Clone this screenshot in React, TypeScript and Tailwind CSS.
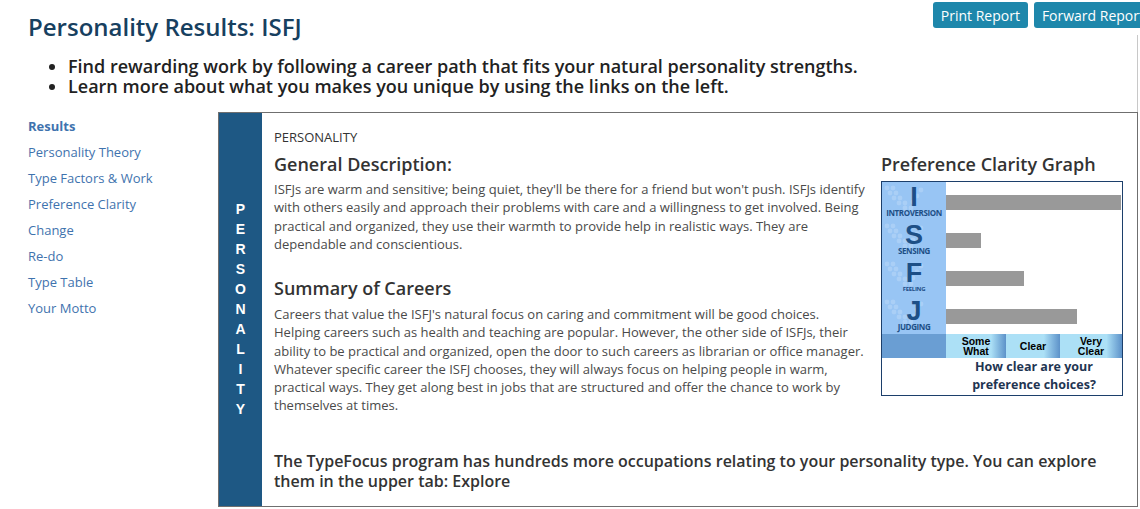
import React from 'react';

const navItems = [
  'Results',
  'Personality Theory',
  'Type Factors & Work',
  'Preference Clarity',
  'Change',
  'Re-do',
  'Type Table',
  'Your Motto',
];

const graphRows = [
  { letter: 'I', label: 'INTROVERSION', bar: 175, labelSize: 'text-[8px]' },
  { letter: 'S', label: 'SENSING', bar: 35, labelSize: 'text-[8px]' },
  { letter: 'F', label: 'FEELING', bar: 78, labelSize: 'text-[6px]' },
  { letter: 'J', label: 'JUDGING', bar: 131, labelSize: 'text-[8px]' },
];

function DotV() {
  // faint dotted "V" swoosh behind each letter
  const dots: [number, number][] = [
    [5, 6], [11, 6], [8, 11], [14, 11], [12, 16], [18, 16], [17, 21], [23, 21],
    [23, 26], [29, 26], [31, 20], [35, 14], [39, 8],
  ];
  return (
    <svg className="absolute left-0 top-0" width="64" height="38" viewBox="0 0 64 38">
      {dots.map(([x, y], i) => (
        <circle key={i} cx={x} cy={y} r="2.4" fill="#ffffff" opacity="0.18" />
      ))}
    </svg>
  );
}

function ClarityGraph() {
  return (
    <div className="w-[242px]">
      <h3 className="text-[18px] leading-6 font-semibold text-[#333]">Preference Clarity Graph</h3>
      <div className="mt-[5px] border border-[#1c3f6b] bg-white">
        <div className="flex">
          <div className="w-[64px] bg-[#98c5f4]">
            {graphRows.map((r) => (
              <div key={r.letter} className="relative h-[38px] flex flex-col items-center">
                <DotV />
                <span className="relative mt-[3px] h-[24px] font-['Liberation_Sans',Arial,sans-serif] text-[27px] leading-[24px] font-bold text-[#1d4f86]">
                  {r.letter}
                </span>
                <span className={`relative ${r.labelSize} leading-[8px] font-bold text-[#1d4f86] tracking-tighter`}>
                  {r.label}
                </span>
              </div>
            ))}
          </div>
          <div className="flex-1">
            {graphRows.map((r) => (
              <div key={r.letter} className="h-[38px] pt-[13px]">
                <div className="h-[15px] bg-[#999999]" style={{ width: r.bar }} />
              </div>
            ))}
          </div>
        </div>
        <div className="flex h-[24px] font-['Liberation_Sans',Arial,sans-serif] text-[10.5px] leading-[10px] font-bold text-black">
          <div className="w-[64px] bg-[#6a9ed3]" />
          <div className="w-[60px] flex items-center justify-center text-center bg-gradient-to-r from-[#ace0f6] from-75% to-[#5d92c9]">
            Some<br />What
          </div>
          <div className="w-[54px] flex items-center justify-center bg-gradient-to-r from-[#ace0f6] from-70% to-[#5d92c9]">
            Clear
          </div>
          <div className="flex-1 flex items-center justify-center text-center bg-gradient-to-r from-[#ace0f6] from-75% to-[#5d92c9]">
            Very<br />Clear
          </div>
        </div>
        <div className="pl-[64px] pb-[1px] text-center text-[12.5px] leading-[18px] font-bold text-[#1f3552]">
          How clear are your
          <br />
          preference choices?
        </div>
      </div>
    </div>
  );
}

export default function App() {
  return (
    <div className="relative w-full h-[509px] overflow-hidden bg-white font-['Open_Sans',sans-serif]">
      <div className="w-[1160px] pt-[2px]">
        <div className="flex items-start">
          <h1 className="ml-[28px] mt-[9px] text-[24px] leading-8 font-semibold text-[#17405f]">
            Personality Results: ISFJ
          </h1>
          <div className="ml-auto mr-[8px] flex gap-[6px]">
            <button className="h-[26px] px-[8px] rounded-[3px] bg-[#1e87ab] text-white text-[14px]">Print Report</button>
            <button className="h-[26px] px-[8px] rounded-[3px] bg-[#1e87ab] text-white text-[14px]">Forward Report</button>
          </div>
        </div>

        <ul className="mt-[13px] ml-[68px] list-disc text-[18px] leading-5 font-semibold text-[#222]">
          <li>Find rewarding work by following a career path that fits your natural personality strengths.</li>
          <li>Learn more about what you makes you unique by using the links on the left.</li>
        </ul>

        <div className="mt-[16px] flex">
          <nav className="ml-[28px] w-[190px] pt-[1px]">
            {navItems.map((item, i) => (
              <div
                key={item}
                className={`text-[13px] leading-[26px] text-[#3f73ae] ${i === 0 ? 'font-bold' : ''}`}
              >
                {item}
              </div>
            ))}
          </nav>

          <div className="w-[920px] h-[395px] border border-[#6f6f6f] flex">
            <div className="w-[43px] bg-[#1e5884] flex flex-col items-center justify-center pb-[1px] font-['Liberation_Sans',Arial,sans-serif] text-[14px] leading-5 font-bold text-white">
              {'PERSONALITY'.split('').map((c, i) => (
                <span key={i}>{c}</span>
              ))}
            </div>

            <div className="flex-1 pl-[12px] pr-[14px] pt-[15px]">
              <div className="flex justify-between">
                <div className="w-[592px]">
                  <div className="text-[13px] leading-[18px] text-[#333]">PERSONALITY</div>
                  <h2 className="mt-[6px] text-[18px] leading-6 font-semibold text-[#333]">General Description:</h2>
                  <p className="mt-[4px] text-[13px] leading-[18.3px] text-[#4a4a4a]">
                    ISFJs are warm and sensitive; being quiet, they'll be there for a friend but won't push. ISFJs
                    identify with others easily and approach their problems with care and a willingness to get
                    involved. Being practical and organized, they use their warmth to provide help in realistic
                    ways. They are dependable and conscientious.
                  </p>
                  <h2 className="mt-[23px] text-[18px] leading-6 font-semibold text-[#333]">Summary of Careers</h2>
                  <p className="mt-[5px] text-[13px] leading-[18.2px] text-[#4a4a4a]">
                    Careers that value the ISFJ's natural focus on caring and commitment will be good choices.
                    Helping careers such as health and teaching are popular. However, the other side of ISFJs,
                    their ability to be practical and organized, open the door to such careers as librarian or
                    office manager. Whatever specific career the ISFJ chooses, they will always focus on helping
                    people in warm, practical ways. They get along best in jobs that are structured and offer the
                    chance to work by themselves at times.
                  </p>
                </div>
                <div className="pt-[24px]">
                  <ClarityGraph />
                </div>
              </div>
              <p className="mt-[37px] text-[16px] leading-5 font-semibold text-[#333]">
                The TypeFocus program has hundreds more occupations relating to your personality type. You can
                explore them in the upper tab: Explore
              </p>
            </div>
          </div>
        </div>
      </div>
      <div className="absolute left-[1137px] top-[35px] h-[77px] w-px bg-[#c8c8c8]" />
    </div>
  );
}
